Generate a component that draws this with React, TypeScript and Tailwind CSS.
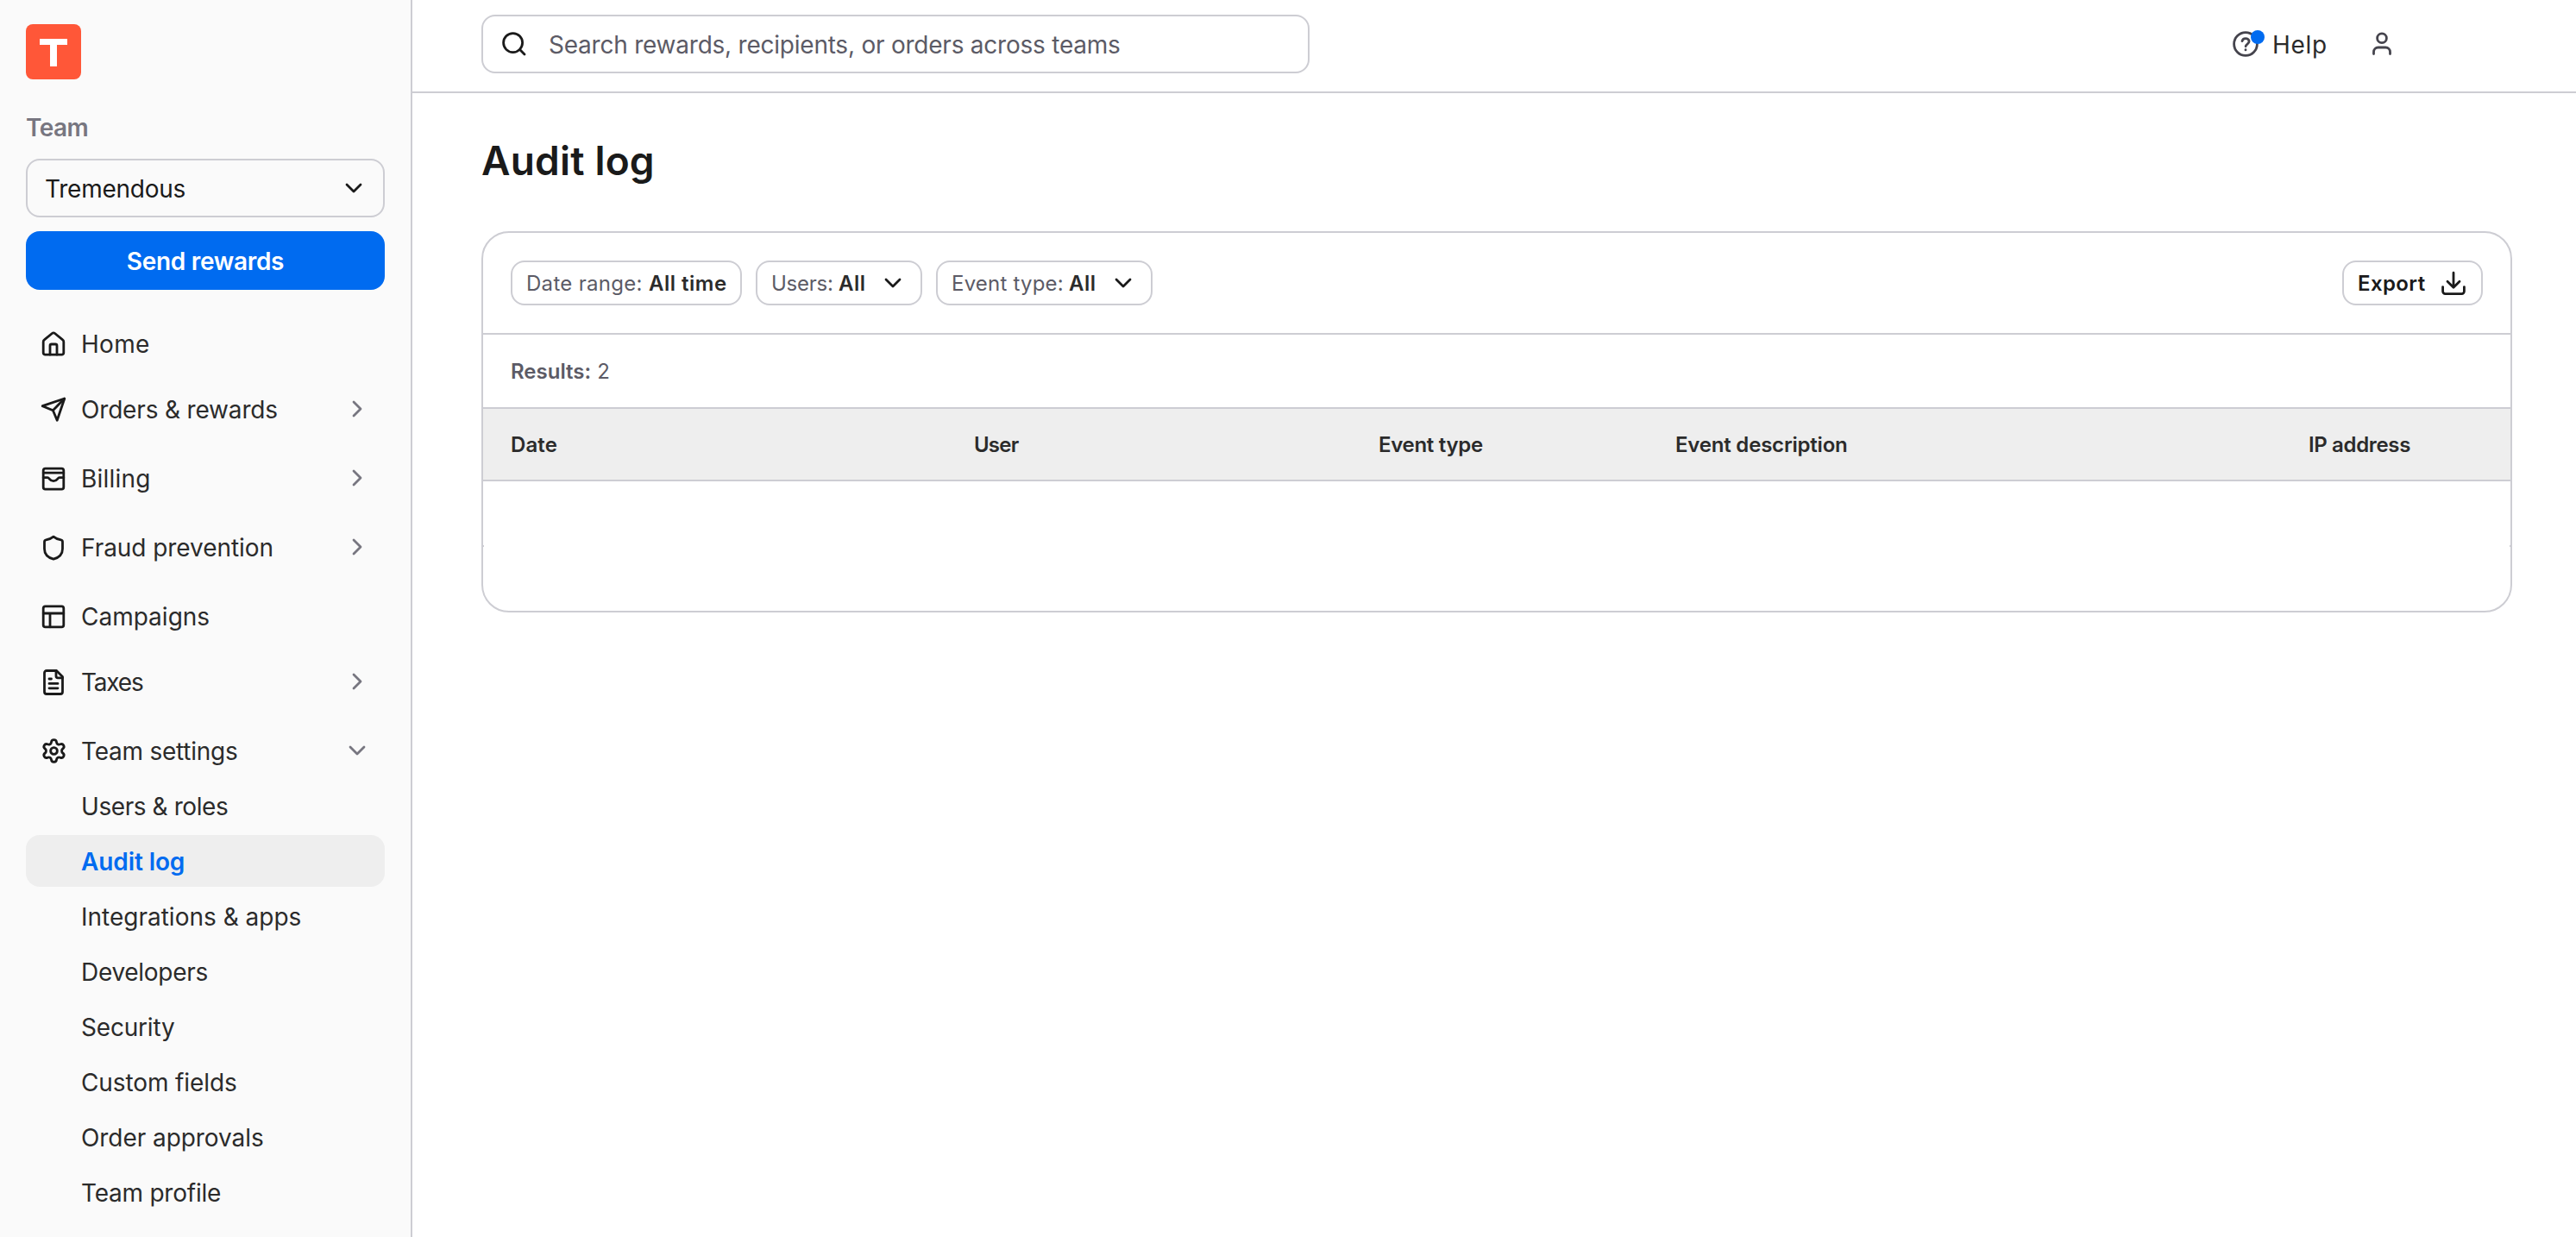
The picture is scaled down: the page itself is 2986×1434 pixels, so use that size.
import React from 'react';
import { Settings } from 'lucide-react';

const navItems = [
  { label: 'Home', icon: 'home', tracking: 'tracking-[0.3px]' },
  { label: 'Orders & rewards', icon: 'send', expandable: true, tracking: 'tracking-[-0.17px]' },
  { label: 'Billing', icon: 'billing', expandable: true, tracking: 'tracking-[0.2px]' },
  { label: 'Fraud prevention', icon: 'shield', expandable: true, tracking: 'tracking-[-0.05px]' },
  { label: 'Campaigns', icon: 'campaigns', tracking: 'tracking-[0px]' },
  { label: 'Taxes', icon: 'taxes', expandable: true, tracking: 'tracking-[-1.2px]' },
  { label: 'Team settings', icon: 'settings', expandable: true, open: true, tracking: 'tracking-[-0.24px]' },
];

const settingsItems = [
  { label: 'Users & roles', tracking: 'tracking-[-0.42px]' },
  { label: 'Audit log', tracking: 'tracking-[-0.1px]', active: true },
  { label: 'Integrations & apps', tracking: 'tracking-[0px]' },
  { label: 'Developers', tracking: 'tracking-[-0.29px]' },
  { label: 'Security', tracking: 'tracking-[-0.19px]' },
  { label: 'Custom fields', tracking: 'tracking-[-0.11px]' },
  { label: 'Order approvals', tracking: 'tracking-[-0.06px]' },
  { label: 'Team profile', tracking: 'tracking-[-0.23px]' },
];

const columns = [
  { label: 'Date', tracking: 'tracking-[0.1px]' },
  { label: 'User', tracking: 'tracking-[-0.8px]' },
  { label: 'Event type', tracking: 'tracking-[-0.3px]' },
  { label: 'Event description', tracking: 'tracking-[-0.2px]' },
  { label: 'IP address', tracking: 'tracking-[-0.35px]' },
];

const iconShapes: Record<string, React.ReactNode> = {
  home: (
    <>
      <path d="M4.2 14.2c0-1 .4-1.7 1.2-2.3l9-7.4c1-.8 2.2-.8 3.2 0l9 7.4c.8.6 1.2 1.3 1.2 2.3V27a2.2 2.2 0 0 1-2.2 2.2H6.4A2.2 2.2 0 0 1 4.2 27z" />
      <path d="M12 29V18.8a1.8 1.8 0 0 1 1.8-1.8h4.4a1.8 1.8 0 0 1 1.8 1.8V29" />
    </>
  ),
  send: (
    <>
      <path d="M28.8 4 3.2 12.7l12.2 5.1 4.8 11.4z" />
      <path d="M28.5 4.2 15.4 17.8" />
    </>
  ),
  billing: (
    <>
      <rect x="4.2" y="5.2" width="23.6" height="24" rx="2.4" />
      <path d="M4.2 10.2h23.6M4.2 15.7h5c2.2 0 2 3.9 6.8 3.9s4.6-3.9 6.8-3.9h5" />
    </>
  ),
  shield: (
    <path d="M16 4.2c-2.4 2-5.2 3.2-8.6 3.7-1.2.2-1.9.9-1.9 2.1v8.2c0 6.2 4.3 10.2 10.5 12 6.2-1.8 10.500-5.800 10.500-12V10c0-1.2-.7-1.9-1.9-2.1-3.4-.5-6.2-1.7-8.600-3.700z" />
  ),
  campaigns: (
    <>
      <rect x="4.2" y="4.8" width="23.6" height="24" rx="2.4" />
      <path d="M4.2 13h23.600M12 13v15.800" />
    </>
  ),
  taxes: (
    <>
      <path d="M5.500 6A2.500 2.500 0 0 1 8 3.500h11.500l7 7V28a2.500 2.500 0 0 1-2.500 2.500H8A2.500 2.500 0 0 1 5.500 28z" />
      <path d="M19 3.500v6.300a2 2 0 0 0 2 2h5.500M11 13h2.500M11 18.400h10M11 23.800h10" />
    </>
  ),
  chevronDown: <path d="m8 12 8 8 8-8" />,
  chevronRight: <path d="m12 8 8 8-8 8" />,
  search: (
    <>
      <circle cx="14.6" cy="14.6" r="11" />
      <path d="m22.6 22.6 5.4 5.4" />
    </>
  ),
  help: (
    <>
      <circle cx="16" cy="16" r="13.4" />
      <path d="M12 12.700c.4-2 1.900-3.100 4-3.100 2.300 0 4.100 1.400 4.100 3.500 0 2.900-4 3-4 5.700M16 22.700v.2" />
    </>
  ),
  user: (
    <>
      <circle cx="16" cy="9.3" r="5.4" />
      <path d="M6.500 27.500v-2.300a5.200 5.200 0 0 1 5.200-5.200h8.600a5.200 5.200 0 0 1 5.200 5.200v2.300" />
    </>
  ),
  download: (
    <>
      <path d="M16 4.200v16.600M9 14.200l7 7 7-7" />
      <path d="M3.600 20.600v5.200a2.800 2.800 0 0 0 2.800 2.800h19.200a2.800 2.800 0 0 0 2.800-2.800v-5.200" />
    </>
  ),
};

function Icon({ name, className = '' }: { name: string; className?: string }) {
  if (name === 'settings') {
    return (
      <span className={`flex size-8 shrink-0 items-center justify-center pt-px ${className}`}>
        <Settings className="size-[31px] shrink-0" strokeWidth={2.2} />
      </span>
    );
  }
  return (
    <svg
      viewBox="0 0 32 32"
      fill="none"
      stroke="currentColor"
      strokeWidth="2.8"
      strokeLinecap="round"
      strokeLinejoin="round"
      className={`size-8 shrink-0 ${className}`}
    >
      {iconShapes[name]}
    </svg>
  );
}

function Sidebar() {
  return (
    <aside className="w-[478px] shrink-0 border-r-2 border-[#cdcdd3] bg-[#fafafa] px-[30px] pt-7">
      <svg viewBox="0 0 64 64" className="size-16">
        <rect width="64" height="64" rx="8" fill="#ff5738" />
        <rect x="16" y="17" width="32" height="7" fill="#fff" />
        <rect x="28" y="17" width="8" height="32" fill="#fff" />
      </svg>
      <div className="mt-9 flex h-[38px] items-center pt-px font-semibold tracking-[-0.6px] text-[#777680]">Team</div>
      <button className="mt-[18px] flex h-[68px] w-full items-center justify-between rounded-2xl border-2 border-[#cdcdd3] pr-[18px] pl-5 text-[#1a1a1a]">
        <span className="pt-0.5 tracking-[-0.25px]">Tremendous</span>
        <Icon name="chevronDown" />
      </button>
      <button className="mt-4 flex h-[68px] w-full items-center justify-center rounded-2xl bg-[#006bf0] pt-0.5 font-semibold tracking-[-0.3px] text-white">
        Send rewards
      </button>

      <nav className="mt-8">
        {navItems.map((item) => (
          <div
            key={item.label}
            className={`flex h-15 items-center gap-4 px-4 ${item.open ? 'mb-1' : item.expandable ? 'mb-5' : 'mb-4'}`}
          >
            <Icon name={item.icon} className="text-[#1a1a1a]" />
            <span className={`grow pt-0.5 ${item.tracking}`}>{item.label}</span>
            {item.expandable && <Icon name={item.open ? 'chevronDown' : 'chevronRight'} className="text-[#777680]" />}
          </div>
        ))}
        <div className="flex flex-col gap-1">
          {settingsItems.map((item) => (
            <div
              key={item.label}
              className={`flex h-15 items-center rounded-2xl pt-0.5 pl-16 ${item.tracking} ${
                item.active ? 'bg-[#eeeeee] font-semibold text-[#006bf0]' : ''
              }`}
            >
              {item.label}
            </div>
          ))}
        </div>
      </nav>
    </aside>
  );
}

function Header() {
  return (
    <header className="flex h-[108px] items-center justify-between border-b-2 border-[#cdcdd3] pr-[209px] pb-1 pl-20">
      <div className="flex h-[68px] w-[960px] items-center gap-6 rounded-2xl border-2 border-[#cdcdd3] pl-5">
        <Icon name="search" className="text-[#1a1a1a]" />
        <span className="pt-0.5 tracking-[-0.23px] text-[#5c5b66]">Search rewards, recipients, or orders across teams</span>
      </div>
      <div className="flex items-center">
        <div className="relative flex">
          <Icon name="help" className="text-[#45444d]" />
          <span className="absolute top-0 left-[22px] size-4 rounded-full bg-[#006bf0]" />
        </div>
        <span className="ml-[15px] w-[111px] pt-0.5 tracking-[0.7px]">Help</span>
        <Icon name="user" className="text-[#45444d]" />
      </div>
    </header>
  );
}

function AuditCard() {
  return (
    <section className="h-[442px] w-[2354px] overflow-hidden rounded-[32px] border-2 border-[#cdcdd3] text-2xl">
      <div className="flex h-[118px] items-center gap-4 border-b-2 border-[#cdcdd3] px-8">
        <button className="flex h-13 w-[268px] items-center rounded-2xl border-2 border-[#cdcdd3] pt-0.5 pl-4">
          <span className="w-[142px] text-left tracking-[0.3px] text-[#5c5b66]">Date range:</span>
          <span className="font-semibold tracking-[0.5px]">All time</span>
        </button>
        <button className="flex h-13 w-[193px] items-center rounded-2xl border-2 border-[#cdcdd3] pl-4">
          <span className="w-[78px] pt-0.5 text-left tracking-[-0.24px] text-[#5c5b66]">Users:</span>
          <span className="w-[47px] pt-0.5 text-left font-semibold tracking-[0.5px]">All</span>
          <Icon name="chevronDown" className="text-[#1a1a1a]" />
        </button>
        <button className="flex h-13 w-[251px] items-center rounded-2xl border-2 border-[#cdcdd3] pl-4">
          <span className="w-[136px] pt-0.5 text-left tracking-[0.2px] text-[#5c5b66]">Event type:</span>
          <span className="w-[47px] pt-0.5 text-left font-semibold tracking-[0.5px]">All</span>
          <Icon name="chevronDown" className="text-[#1a1a1a]" />
        </button>
        <button className="ml-auto flex h-13 w-[163px] items-center justify-between rounded-2xl border-2 border-[#cdcdd3] px-4 font-semibold text-[#1a1a1a]">
          <span className="pt-0.5 tracking-[0.4px]">Export</span>
          <Icon name="download" />
        </button>
      </div>
      <div className="flex h-[86px] items-center gap-[7px] border-b-2 border-[#cdcdd3] pt-0.5 pl-8 text-[#5c5b66]">
        <span className="font-semibold">Results:</span>
        <span>2</span>
      </div>
      <div className="grid h-[84px] grid-cols-[537px_469px_344px_734px_1fr] items-center border-b-2 border-[#cdcdd3] bg-[#eeeeee] pt-0.5 pl-8 font-semibold">
        {columns.map((col) => (
          <span key={col.label} className={col.tracking}>
            {col.label}
          </span>
        ))}
      </div>
      {/* row divider only shows at the card edges */}
      <div className="flex h-[76px] items-end justify-between">
        <span className="h-0.5 w-px bg-[#cdcdd3]" />
        <span className="h-0.5 w-px bg-[#cdcdd3]" />
      </div>
    </section>
  );
}

function App() {
  return (
    <div className="flex h-screen overflow-hidden bg-white font-[Inter,'Liberation_Sans',sans-serif] text-[28px] leading-[38px] text-[#2b2b2b]">
      <Sidebar />
      <div className="grow">
        <Header />
        <main className="pl-20">
          <h1 className="flex h-40 items-center pb-1 text-[46px] font-semibold tracking-[0.2px] text-[#1a1a1a]">Audit log</h1>
          <AuditCard />
        </main>
      </div>
    </div>
  );
}

export default App;
